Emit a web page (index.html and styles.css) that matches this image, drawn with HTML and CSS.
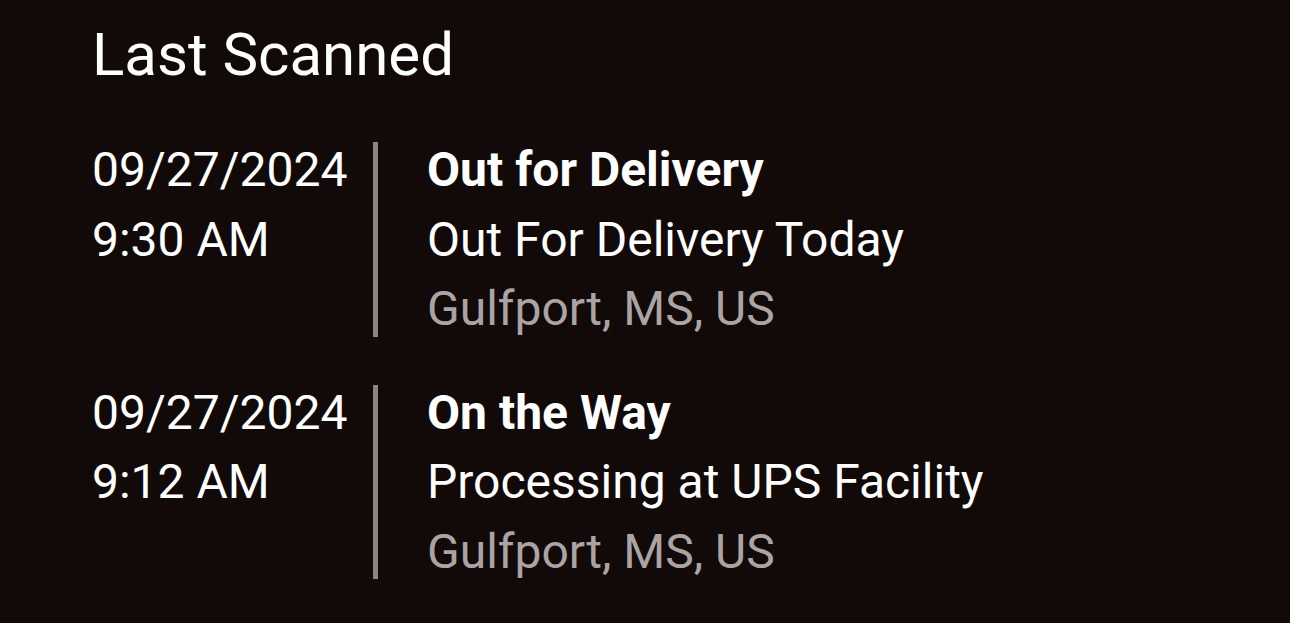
FILE: index.html
```html
<!DOCTYPE html>
<html lang="en">
<head>
<meta charset="utf-8">
<title>Last Scanned</title>
<link rel="stylesheet" href="styles.css">
</head>
<body>
<main class="scan">
  <h1 class="scan-title">Last Scanned</h1>
  <div class="events">
    <div class="event">
      <div class="event-time">
        <div class="line">09/27/2024</div>
        <div class="line">9:30 AM</div>
      </div>
      <div class="event-detail">
        <div class="detail-text">
          <div class="line status">Out for Delivery</div>
          <div class="line">Out For Delivery Today</div>
          <div class="line place">Gulfport, MS, US</div>
        </div>
      </div>
    </div>
    <div class="event">
      <div class="event-time">
        <div class="line">09/27/2024</div>
        <div class="line">9:12 AM</div>
      </div>
      <div class="event-detail">
        <div class="detail-text">
          <div class="line status">On the Way</div>
          <div class="line">Processing at UPS Facility</div>
          <div class="line place">Gulfport, MS, US</div>
        </div>
      </div>
    </div>
  </div>
</main>
</body>
</html>
```

FILE: styles.css
```css
html, body {
  margin: 0;
  padding: 0;
  background: #120a09;
  color: #ffffff;
  font-family: Roboto, "Noto Sans", "Liberation Sans", sans-serif;
  height: 100%;
  overflow: hidden;
}

.scan {
  padding: 19px 0 0 92px;
}

.scan-title {
  margin: 0;
  font-size: 60px;
  font-weight: 400;
  line-height: normal;
}

.events {
  display: flex;
  flex-direction: column;
  gap: 48px;
  margin-top: 52px;
}

.event {
  display: flex;
  align-items: flex-start;
}

.line {
  font-size: 48px;
  line-height: 69.5px;
  white-space: nowrap;
}

.event-time {
  width: 281px;
  margin-top: -7px;
}

.event-detail {
  border-left: 5px solid #8a8484;
  padding-left: 49px;
}

.detail-text {
  margin: -7px 0;
}

.status {
  font-weight: 700;
}

.place {
  color: #aaa5a4;
}
```
